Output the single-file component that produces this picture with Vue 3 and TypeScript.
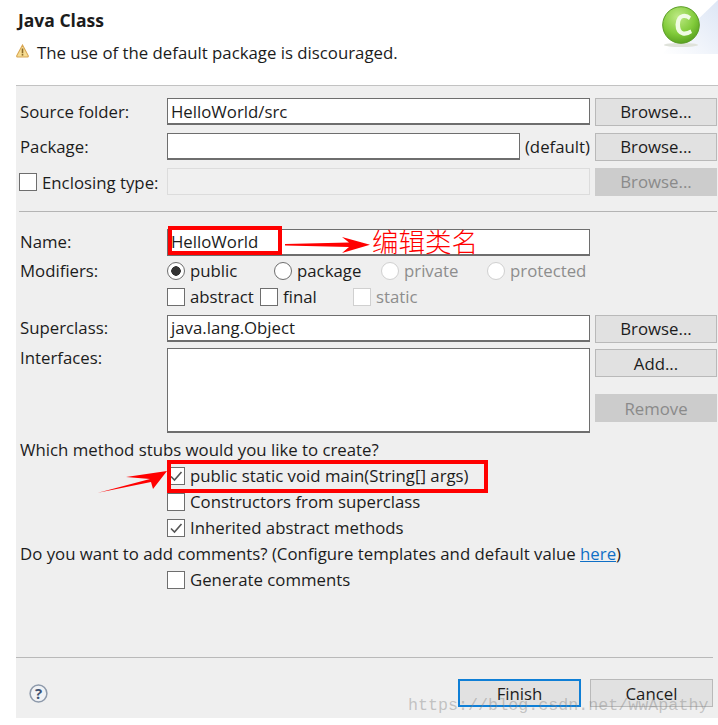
<script setup lang="ts">
const stubs = [
  { label: 'public static void main(String[] args)', checked: true },
  { label: 'Constructors from superclass', checked: false },
  { label: 'Inherited abstract methods', checked: true },
]
</script>

<template>
  <div class="page">
    <header class="banner">
      <div class="banner-text">
        <h1 class="title">Java Class</h1>
        <p class="message">
          <svg class="warn" width="13" height="14" viewBox="0 0 13 14">
            <path d="M6.5 1 L12.2 11.6 Q12.6 13 11.2 13 H1.8 Q.4 13 .8 11.6 Z" fill="#f6dc92" stroke="#d8a552" stroke-width="1.1" />
            <rect x="5.7" y="4.5" width="1.6" height="4.8" fill="#8a6a2a" />
            <rect x="5.7" y="10" width="1.6" height="1.6" fill="#8a6a2a" />
          </svg>
          <span>The use of the default package is discouraged.</span>
        </p>
      </div>
      <svg class="logo" width="64" height="55" viewBox="0 0 64 55">
        <defs>
          <linearGradient id="wedge" x1="0" y1="1" x2="1" y2="0">
            <stop offset="0" stop-color="#ffffff" />
            <stop offset="1" stop-color="#dde6f5" />
          </linearGradient>
          <radialGradient id="ball" cx="0.42" cy="0.28" r="0.82">
            <stop offset="0" stop-color="#bfea86" />
            <stop offset="0.55" stop-color="#83cc3c" />
            <stop offset="1" stop-color="#4c9516" />
          </radialGradient>
        </defs>
        <path d="M8 54 L64 0 V54 Z" fill="url(#wedge)" />
        <ellipse cx="27" cy="45" rx="17" ry="2" fill="#dfe2da" />
        <circle cx="27" cy="25" r="18.3" fill="url(#ball)" stroke="#5a9c26" stroke-width="1" />
        <path d="M37 16.5 Q33.5 13 28.5 14 Q22 15.5 21.5 24.5 Q21.5 33.5 28.5 35.5 Q33.5 36.5 38 33 L36.5 29.5 Q32.5 32 29.5 31.5 Q26 30.5 26 24.5 Q26 18.5 29.5 18 Q32.5 17.5 35 20 Z" fill="#f0fbe4" />
      </svg>
    </header>

    <main class="panel">
      <div class="row top">
        <label class="label">Source folder:</label>
        <div class="input">HelloWorld/src</div>
        <button class="btn">Browse...</button>
      </div>
      <div class="row top gap">
        <label class="label">Package:</label>
        <div class="field-split">
          <div class="input grow"></div>
          <span>(default)</span>
        </div>
        <button class="btn">Browse...</button>
      </div>
      <div class="row top gap">
        <div class="label check-label"><span class="box"></span>Enclosing type:</div>
        <div class="input off"></div>
        <button class="btn btn-off">Browse...</button>
      </div>

      <hr class="rule" />

      <div class="row name-row">
        <label class="label">Name:</label>
        <div class="input">HelloWorld</div>
      </div>
      <div class="line mods">
        <label class="label">Modifiers:</label>
        <span class="opt r1"><span class="radio on"></span>public</span>
        <span class="opt r2"><span class="radio"></span>package</span>
        <span class="opt r3 dim"><span class="radio"></span>private</span>
        <span class="opt dim"><span class="radio"></span>protected</span>
      </div>
      <div class="line indent">
        <span class="opt c1"><span class="box"></span>abstract</span>
        <span class="opt c2"><span class="box"></span>final</span>
        <span class="opt dim"><span class="box"></span>static</span>
      </div>
      <div class="row super-row">
        <label class="label">Superclass:</label>
        <div class="input">java.lang.Object</div>
        <button class="btn">Browse...</button>
      </div>
      <div class="row iface-row">
        <label class="label iface-label">Interfaces:</label>
        <div class="input area"></div>
        <div class="stack">
          <button class="btn">Add...</button>
          <button class="btn btn-off">Remove</button>
        </div>
      </div>

      <div class="line which">Which method stubs would you like to create?</div>
      <div v-for="s in stubs" :key="s.label" class="line indent">
        <span class="opt">
          <span class="box">
            <svg v-if="s.checked" width="16" height="16" viewBox="0 0 16 16">
              <path d="M3 8.5 L6.5 12 L13.5 4" fill="none" stroke="#555" stroke-width="1.6" />
            </svg>
          </span>{{ s.label }}
        </span>
      </div>
      <div class="line"><span>Do you want to add comments? (Configure templates and default value <a class="link">here</a>)</span></div>
      <div class="line indent">
        <span class="opt"><span class="box"></span>Generate comments</span>
      </div>

      <footer class="foot">
        <svg class="help" width="19" height="19" viewBox="0 0 19 19">
          <circle cx="9.5" cy="9.5" r="8.4" fill="#f0f2f5" stroke="#8e9aab" stroke-width="1.5" />
          <text x="9.5" y="14.5" text-anchor="middle" class="help-q">?</text>
        </svg>
        <button class="btn foot-btn primary">Finish</button>
        <button class="btn foot-btn">Cancel</button>
      </footer>
    </main>

    <!-- Annotations drawn on top of the screenshot -->
    <div class="mark mark-name"></div>
    <div class="mark mark-main"></div>
    <svg class="arrow arrow-name" width="86" height="20" viewBox="0 0 86 20">
      <path d="M0 9 L64 7.5 L57 2 L85 9.7 L57 18 L64 12 L0 10.5 Z" fill="#ff0000" />
    </svg>
    <span class="note">编辑类名</span>
    <svg class="arrow arrow-main" width="72" height="26" viewBox="0 0 72 26">
      <path d="M0 24.7 L52 11 L28 9 L69 3 L55 21 L53 14 Z" fill="#ff0000" />
    </svg>
    <span class="watermark">https://blog.csdn.net/wwApathy</span>
  </div>
</template>

<style>
html, body { margin: 0; background: #fff; }
</style>

<style scoped>
.page {
  position: relative;
  width: 718px;
  height: 725px;
  overflow: hidden;
  font-family: "Open Sans", "Noto Sans", sans-serif;
  font-size: 16.8px;
  color: #1c1c1c;
  background: #fff;
}
.banner {
  height: 85px;
  display: flex;
  justify-content: space-between;
  align-items: flex-start;
  box-sizing: border-box;
  padding-left: 16px;
}
.banner-text { padding-top: 9px; }
.title { margin: 0 0 0 2px; font-size: 17.5px; font-weight: 700; line-height: 22px; }
.message { margin: 11px 0 0; display: flex; align-items: center; gap: 8px; line-height: 22px; }
.warn { flex: none; margin-top: -4px; }
.logo { flex: none; }
.panel {
  height: 633px;
  margin-left: 16px;
  box-sizing: border-box;
  padding: 12px 1px 0 3px;
  background: #efefef;
  border-top: 1px solid #c2c2c2;
}
.row { display: flex; align-items: center; height: 27px; }
.gap { margin-top: 8px; }
.label { width: 147px; flex: none; margin-left: 1px; padding-bottom: 2px; }
.top .label { padding-bottom: 0; }
.top .input { line-height: 26px; }
.check-label { display: flex; align-items: center; gap: 5px; margin-left: 0; width: 148px; padding-top: 2px; }
.check-label .box { margin-top: 0; margin-bottom: 2px; }
.input {
  width: 423px;
  height: 27px;
  flex: none;
  box-sizing: border-box;
  padding-left: 3px;
  line-height: 24px;
  background: #fff;
  border: 1px solid #6e6e6e;
  border-bottom-width: 2px;
}
.input.off { background: #f0f0f0; border: 1px solid #dcdcdc; }
.input.grow { width: auto; flex: 1; }
.field-split { width: 423px; flex: none; display: flex; align-items: center; gap: 5px; }
.btn {
  width: 122px;
  height: 28px;
  flex: none;
  margin-left: 5px;
  padding: 0;
  font: inherit;
  color: inherit;
  background: #e1e1e1;
  border: 1px solid #b9b9b9;
}
.btn-off { background: #cccccc; border-color: #cccccc; color: #8a8a8a; }
.rule { margin: 16px 0 0; height: 1px; border: 0; background: #b4b4b4; }
.name-row { margin-top: 17px; }
.line {
  display: flex;
  align-items: center;
  height: 26px;
  box-sizing: border-box;
  padding-left: 1px;
  padding-bottom: 2px;
  white-space: nowrap;
}
.line .label { padding-bottom: 0; }
.mods { margin-top: 2px; padding-left: 0; }
.indent { padding-left: 148px; }
.opt { display: inline-flex; align-items: center; gap: 5px; }
.r1 { width: 107px; }
.r2 { width: 107px; }
.r3 { width: 106px; }
.c1 { width: 93px; }
.c2 { width: 93px; }
.dim { color: #8d8d8d; }
.radio {
  width: 18px;
  height: 18px;
  flex: none;
  margin-top: 2px;
  box-sizing: border-box;
  border-radius: 50%;
  background: #fff;
  border: 1px solid #6e6e6e;
  display: inline-block;
}
.radio.on { background: radial-gradient(circle, #333 0 4.5px, #fff 5px); }
.dim .radio, .dim .box { border-color: #d0d0d0; }
.box {
  width: 18px;
  height: 18px;
  flex: none;
  margin-top: 2px;
  box-sizing: border-box;
  background: #fff;
  border: 1px solid #6e6e6e;
  display: inline-flex;
  align-items: center;
  justify-content: center;
}
.super-row { margin-top: 5px; }
.iface-row { margin-top: 6px; height: 85px; align-items: flex-start; }
.iface-label { line-height: 20px; }
.area { height: 85px; }
.stack { display: flex; flex-direction: column; gap: 17px; margin-top: 1px; }
.which { margin-top: 4px; }
.link { color: #0f6fc6; text-decoration: underline; }
.foot {
  margin: 64px 4px 0 -3px;
  border-top: 1px solid #b9b9b9;
  display: flex;
  align-items: center;
  height: 60px;
  padding-top: 11px;
  box-sizing: border-box;
}
.help { margin-left: 13px; margin-right: auto; }
.help-q { font-size: 15px; font-weight: 700; fill: #3f5273; }
.foot-btn { width: 123px; height: 28px; margin-left: 0; }
.foot-btn.primary { border: 2px solid #0f7fd6; margin-right: 9px; }
.mark { position: absolute; box-sizing: border-box; border: 4px solid #f00; }
.mark-name { left: 168px; top: 226px; width: 114px; height: 29px; }
.mark-main { left: 167px; top: 460px; width: 321px; height: 33px; }
.arrow { position: absolute; }
.arrow-name { left: 285px; top: 235px; }
.arrow-main { left: 98px; top: 468px; }
.note { position: absolute; left: 372px; top: 222px; font-family: "Noto Sans CJK SC", sans-serif; font-weight: 300; font-size: 26.5px; line-height: 38px; color: #f00; }
.watermark { position: absolute; left: 408px; top: 696px; font-family: "Liberation Mono", monospace; font-size: 16.7px; line-height: 20px; color: rgba(130, 130, 130, 0.42); }
</style>
